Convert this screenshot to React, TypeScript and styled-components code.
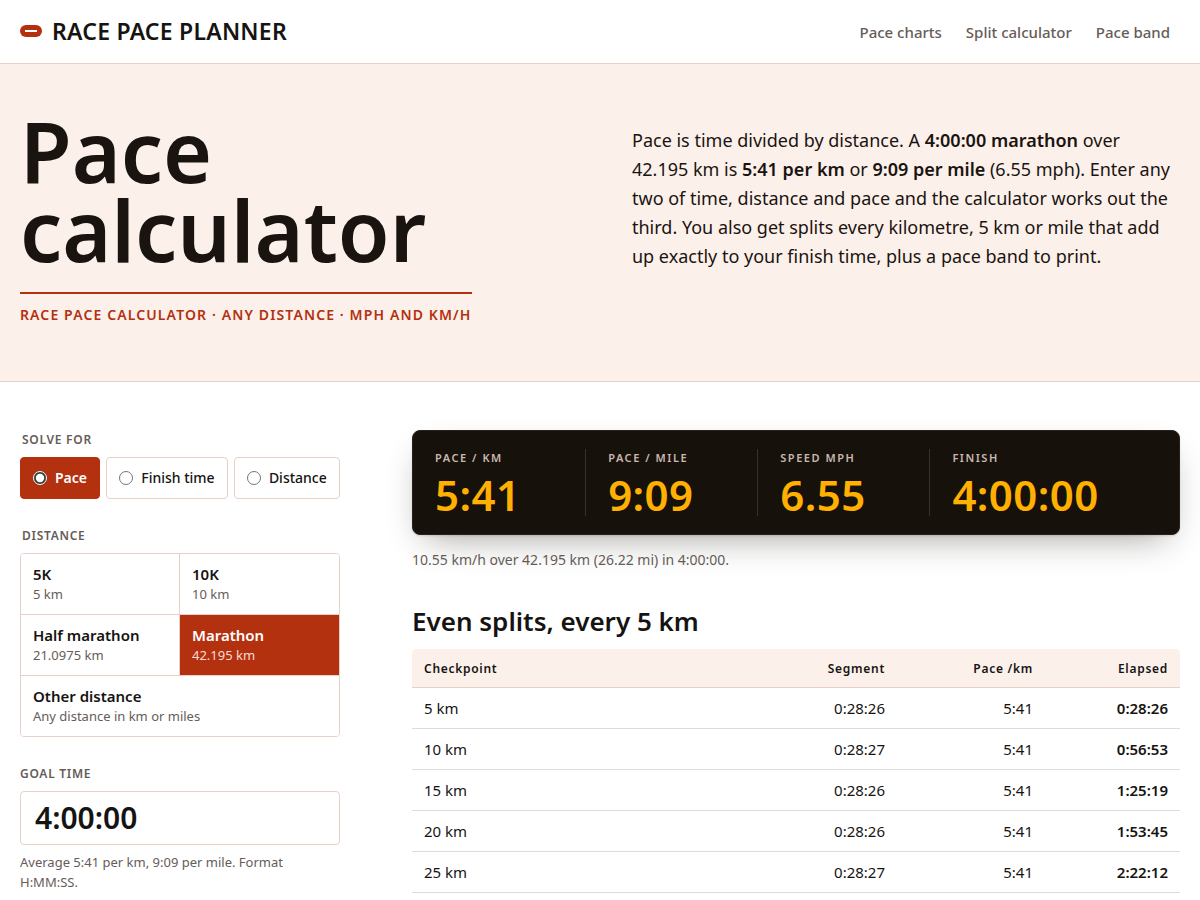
import React, { useState } from "react";
import styled, { createGlobalStyle } from "styled-components";

const c = {
  ink: "#1a1410",
  text: "#161412",
  muted: "#665c57",
  accent: "#b3310f",
  tint: "#fcf0eb",
  line: "#e8d0c8",
  rule: "#e0dbd8",
  board: "#17110c",
  amber: "#ffb000",
};

const GlobalStyle = createGlobalStyle`
  * { box-sizing: border-box; }
  body {
    margin: 0;
    background: #fff;
    color: ${c.text};
    font-family: "Noto Sans", "Liberation Sans", sans-serif;
    font-size: 16px;
    line-height: 24px;
  }
`;

const Header = styled.header`
  display: flex;
  align-items: center;
  justify-content: space-between;
  height: 64px;
  padding: 0 20px;
  border-bottom: 1px solid ${c.line};
`;

const Brand = styled.a`
  display: flex;
  align-items: center;
  gap: 10px;
  padding-bottom: 1px;
  color: ${c.text};
  font-size: 23px;
  font-weight: 600;
  letter-spacing: 0.01em;
  text-decoration: none;
  text-transform: uppercase;
`;

const Nav = styled.nav`
  display: flex;
  gap: 4px;
`;

const NavLink = styled.a`
  padding: 8px 10px;
  color: ${c.muted};
  font-size: 15px;
  font-weight: 500;
  text-decoration: none;
`;

const Hero = styled.section`
  display: grid;
  grid-template-columns: 1fr 1fr;
  align-items: start;
  gap: 64px;
  padding: 47px 20px 56px;
  background: ${c.tint};
  border-bottom: 1px solid ${c.line};
`;

const Title = styled.h1`
  margin: 0;
  color: ${c.ink};
  font-size: 84px;
  font-weight: 600;
  line-height: 79px;
`;

const Tagline = styled.p`
  width: fit-content;
  margin: 23px 0 0;
  padding-top: 10px;
  border-top: 2px solid ${c.accent};
  color: ${c.accent};
  font-size: 14px;
  font-weight: 600;
  letter-spacing: 0.08em;
  line-height: 21px;
  text-transform: uppercase;
`;

const Lede = styled.p`
  margin: 15px 0 0;
  color: ${c.ink};
  font-size: 18px;
  line-height: 29px;

  strong { font-weight: 600; }
`;

const Layout = styled.main`
  display: grid;
  grid-template-columns: 320px minmax(0, 1fr);
  align-items: start;
  gap: 72px;
  padding: 48px 20px;
`;

const Form = styled.form`
  display: flex;
  flex-direction: column;
  gap: 27px;
`;

const Group = styled.fieldset`
  min-width: 0;
  margin: 0;
  padding: 0;
  border: 0;
`;

const labelText = `
  font-size: 12px;
  font-weight: 600;
  letter-spacing: 0.06em;
  line-height: 19px;
  text-transform: uppercase;
`;

const Legend = styled.legend`
  ${labelText}
  margin-bottom: 8px;
  padding: 0 2px;
  color: ${c.muted};
`;

const FieldLabel = styled.label`
  ${labelText}
  display: block;
  margin-bottom: 8px;
  color: ${c.muted};
`;

const Segments = styled.div`
  display: flex;
  gap: 6px;
`;

const Segment = styled.label<{ $on: boolean }>`
  display: flex;
  flex: 1 1 auto;
  align-items: center;
  gap: 8px;
  height: 42px;
  padding: 0 12px;
  border: 1px solid ${(p) => (p.$on ? c.accent : c.line)};
  border-radius: 4px;
  background: ${(p) => (p.$on ? c.accent : "#fff")};
  color: ${(p) => (p.$on ? "#fff" : c.text)};
  font-size: 14px;
  font-weight: ${(p) => (p.$on ? 600 : 500)};
  white-space: nowrap;
  cursor: pointer;

  input {
    width: 14px;
    height: 14px;
    margin: 0;
    accent-color: #fff;
  }
`;

const Presets = styled.div`
  display: grid;
  grid-template-columns: 1fr 1fr;
  overflow: hidden;
  border: 1px solid ${c.line};
  border-radius: 4px;
`;

const Preset = styled.button<{ $on: boolean; $wide?: boolean }>`
  grid-column: ${(p) => (p.$wide ? "1 / -1" : "auto")};
  padding: 10px 12px;
  border: 0 solid ${c.line};
  border-bottom-width: ${(p) => (p.$wide ? "0" : "1px")};
  background: ${(p) => (p.$on ? c.accent : "#fff")};
  color: ${(p) => (p.$on ? "#fff" : c.text)};
  font-family: inherit;
  font-size: 15px;
  font-weight: 600;
  line-height: 20px;
  text-align: left;
  cursor: pointer;

  &:nth-child(odd) { border-right-width: ${(p) => (p.$wide ? "0" : "1px")}; }
`;

const PresetNote = styled.span<{ $on: boolean }>`
  display: block;
  color: ${(p) => (p.$on ? "#f7ddd4" : c.muted)};
  font-size: 13px;
  font-weight: 400;
`;

const TimeInput = styled.input`
  display: block;
  width: 100%;
  height: 54px;
  padding: 0 14px 2px;
  border: 1px solid ${c.line};
  border-radius: 4px;
  background: #fff;
  color: ${c.text};
  font-family: inherit;
  font-size: 30px;
  font-weight: 600;
`;

const Hint = styled.p`
  margin: 7px 0 0;
  color: ${c.muted};
  font-size: 13px;
  line-height: 20px;
`;

const Board = styled.dl`
  display: grid;
  grid-template-columns: 1fr 1fr 1fr 1.45fr;
  margin: 0;
  padding: 18px 0;
  border: 1px solid #2a211c;
  border-radius: 8px;
  background: ${c.board};
  box-shadow: 0 1px 2px rgba(24, 17, 12, 0.12), 0 14px 36px -14px rgba(24, 17, 12, 0.45);
`;

const Reading = styled.div`
  padding: 0 22px;

  & + & { border-left: 1px solid #38302b; }

  dt {
    color: #c9b8ae;
    font-size: 11px;
    font-weight: 600;
    letter-spacing: 0.14em;
    line-height: 18px;
    text-transform: uppercase;
  }

  dd {
    margin: 6px 0 0;
    color: ${c.amber};
    font-size: 42px;
    font-weight: 600;
    letter-spacing: 0.01em;
    line-height: 43px;
  }
`;

const Summary = styled.p`
  margin: 14px 0 0;
  color: ${c.muted};
  font-size: 14px;
  line-height: 22px;
`;

const SplitsTitle = styled.h2`
  margin: 34px 0 12px;
  font-size: 26px;
  font-weight: 600;
  line-height: 32px;
`;

const SplitsTable = styled.table`
  width: 100%;
  border-collapse: separate;
  border-spacing: 0;
  table-layout: fixed;
  font-size: 15px;
  line-height: 22px;
  font-variant-numeric: tabular-nums;

  th, td {
    padding: 9px 12px;
    border-bottom: 1px solid ${c.rule};
    font-weight: 400;
    text-align: right;
  }

  th:first-child { text-align: left; }

  thead th {
    padding: 10px 12px 8px;
    background: ${c.tint};
    border-color: ${c.line};
    font-size: 12px;
    font-weight: 600;
    letter-spacing: 0.06em;
    line-height: 20px;
  }

  thead th:first-child { border-top-left-radius: 4px; }
  thead th:last-child { border-top-right-radius: 4px; }
  tbody td:last-child { font-weight: 600; }
`;

const Column = styled.col<{ $width?: number }>`
  width: ${(p) => (p.$width ? `${p.$width}px` : "auto")};
`;

const modes = ["Pace", "Finish time", "Distance"];

const presets = [
  { name: "5K", note: "5 km" },
  { name: "10K", note: "10 km" },
  { name: "Half marathon", note: "21.0975 km" },
  { name: "Marathon", note: "42.195 km" },
  { name: "Other distance", note: "Any distance in km or miles", wide: true },
];

const readings = [
  ["Pace / km", "5:41"],
  ["Pace / mile", "9:09"],
  ["Speed mph", "6.55"],
  ["Finish", "4:00:00"],
];

const splits = [
  ["5 km", "0:28:26", "5:41", "0:28:26"],
  ["10 km", "0:28:27", "5:41", "0:56:53"],
  ["15 km", "0:28:26", "5:41", "1:25:19"],
  ["20 km", "0:28:26", "5:41", "1:53:45"],
  ["25 km", "0:28:27", "5:41", "2:22:12"],
];

function Logo() {
  return (
    <svg width="22" height="12" viewBox="0 0 22 12" aria-hidden="true">
      <rect width="22" height="12" rx="6" fill={c.accent} />
      <rect x="5" y="5" width="12" height="2" fill="#fff" />
    </svg>
  );
}

export default function App() {
  const [mode, setMode] = useState("Pace");
  const [distance, setDistance] = useState("Marathon");
  const [goal, setGoal] = useState("4:00:00");

  return (
    <>
      <GlobalStyle />
      <Header>
        <Brand href="#">
          <Logo />
          Race Pace Planner
        </Brand>
        <Nav>
          <NavLink href="#charts">Pace charts</NavLink>
          <NavLink href="#splits">Split calculator</NavLink>
          <NavLink href="#band">Pace band</NavLink>
        </Nav>
      </Header>
      <Hero>
        <div>
          <Title>Pace calculator</Title>
          <Tagline>Race pace calculator · Any distance · mph and km/h</Tagline>
        </div>
        <Lede>
          Pace is time divided by distance. A <strong>4:00:00 marathon</strong> over 42.195 km is{" "}
          <strong>5:41 per km</strong> or <strong>9:09 per mile</strong> (6.55 mph). Enter any two of
          time, distance and pace and the calculator works out the third. You also get splits every
          kilometre, 5 km or mile that add up exactly to your finish time, plus a pace band to print.
        </Lede>
      </Hero>
      <Layout>
        <Form>
          <Group>
            <Legend>Solve for</Legend>
            <Segments>
              {modes.map((m) => (
                <Segment key={m} $on={m === mode}>
                  <input type="radio" name="mode" checked={m === mode} onChange={() => setMode(m)} />
                  {m}
                </Segment>
              ))}
            </Segments>
          </Group>
          <Group>
            <Legend>Distance</Legend>
            <Presets>
              {presets.map((p) => (
                <Preset
                  key={p.name}
                  type="button"
                  aria-pressed={p.name === distance}
                  $on={p.name === distance}
                  $wide={p.wide}
                  onClick={() => setDistance(p.name)}
                >
                  {p.name}
                  <PresetNote $on={p.name === distance}>{p.note}</PresetNote>
                </Preset>
              ))}
            </Presets>
          </Group>
          <div>
            <FieldLabel htmlFor="goal">Goal time</FieldLabel>
            <TimeInput id="goal" value={goal} onChange={(e) => setGoal(e.target.value)} />
            <Hint>Average 5:41 per km, 9:09 per mile. Format H:MM:SS.</Hint>
          </div>
        </Form>
        <section>
          <Board>
            {readings.map(([label, value]) => (
              <Reading key={label}>
                <dt>{label}</dt>
                <dd>{value}</dd>
              </Reading>
            ))}
          </Board>
          <Summary>10.55 km/h over 42.195 km (26.22 mi) in 4:00:00.</Summary>
          <SplitsTitle id="splits">Even splits, every 5 km</SplitsTitle>
          <SplitsTable aria-labelledby="splits">
            <colgroup>
              <Column />
              <Column $width={148} />
              <Column $width={148} />
              <Column $width={135} />
            </colgroup>
            <thead>
              <tr>
                <th scope="col">Checkpoint</th>
                <th scope="col">Segment</th>
                <th scope="col">Pace /km</th>
                <th scope="col">Elapsed</th>
              </tr>
            </thead>
            <tbody>
              {splits.map(([point, segment, pace, elapsed]) => (
                <tr key={point}>
                  <th scope="row">{point}</th>
                  <td>{segment}</td>
                  <td>{pace}</td>
                  <td>{elapsed}</td>
                </tr>
              ))}
            </tbody>
          </SplitsTable>
        </section>
      </Layout>
    </>
  );
}
